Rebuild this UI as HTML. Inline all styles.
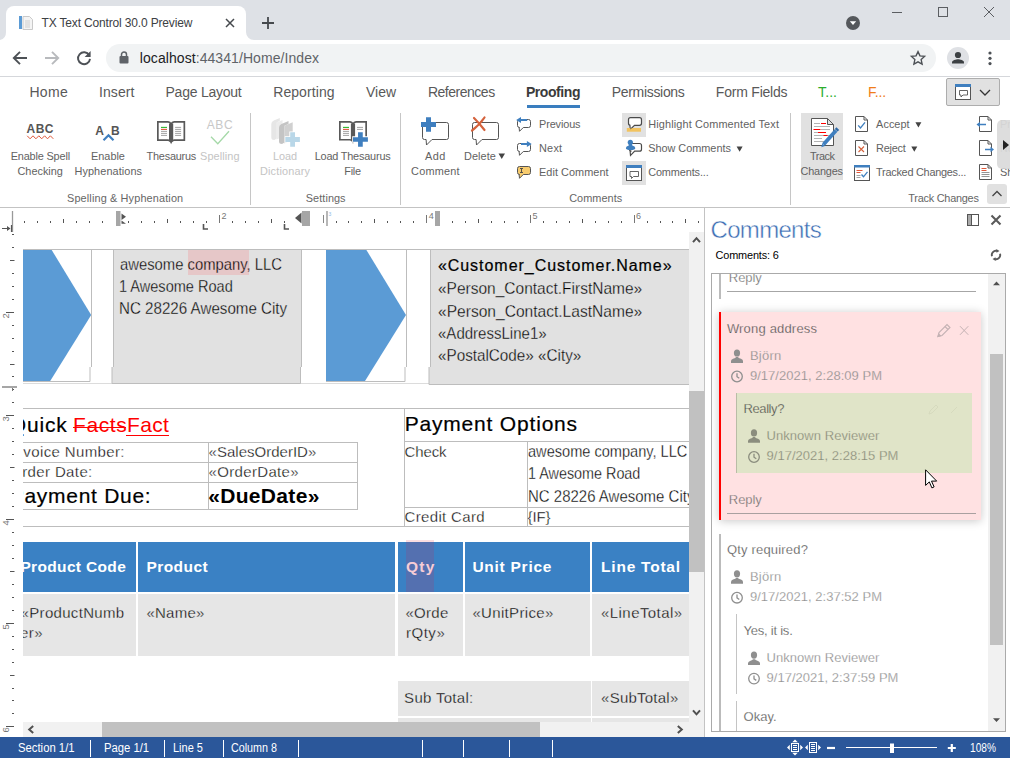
<!DOCTYPE html>
<html lang="en"><head><meta charset="utf-8"><title>TX Text Control 30.0 Preview</title>
<style>
*{box-sizing:border-box;margin:0;padding:0}
html,body{width:1010px;height:758px;overflow:hidden;background:#fff}
body{position:relative;font-family:"Liberation Sans",sans-serif;color:#444;font-size:12px}
.a{position:absolute}
.t{position:absolute;white-space:nowrap;line-height:1}
svg{position:absolute;overflow:visible}
.clip{position:absolute;overflow:hidden}
</style></head><body>
<!-- BROWSER CHROME -->
<div class="a" style="left:0px;top:0px;width:1010px;height:40px;background:#dee1e6;"></div><div class="a" style="left:6px;top:6px;width:240px;height:34px;background:#fff;border-radius:8px 8px 0 0"></div><svg style="left:0;top:32px" width="254" height="8" viewBox="0 0 254 8"><path d="M0 8h6V0a8 8 0 0 1-6 8z" fill="#fff"/><path d="M254 8h-8V0a8 8 0 0 0 8 8z" fill="#fff"/></svg><div class="a" style="left:0px;top:40px;width:1010px;height:36px;background:#fff;"></div><div class="a" style="left:0px;top:76px;width:1010px;height:1px;background:#d5d7db;"></div><div class="a" style="left:106px;top:44px;width:830px;height:28px;background:#f1f3f4;border-radius:14px"></div><div class="t" style="left:41.5px;top:17.0px;font-size:12px;color:#3c4043;letter-spacing:-0.16px;">TX Text Control 30.0 Preview</div><div class="t" style="left:139.8px;top:51.0px;font-size:14px;color:#202124;letter-spacing:0.07px;">localhost<span style="color:#5f6368">:44341/Home/Index</span></div>
<svg style="left:18px;top:15px" width="16" height="16" viewBox="0 0 16 16"><rect x="1" y="1" width="3" height="13" fill="#5b9bd5"/><path d="M5 1.500h6.500l3 3v10h-9.500z" fill="#f4f4f4" stroke="#c9c9c9"/><path d="M7 6h5M7 8h5M7 10h5M7 12h5" stroke="#cfcfcf"/></svg>
<svg style="left:225px;top:18px" width="10" height="10" viewBox="0 0 10 10"><path d="M1 1l8 8M9 1l-8 8" stroke="#45494d" stroke-width="1.500" fill="none"/></svg>
<svg style="left:262px;top:17px" width="12" height="12" viewBox="0 0 12 12"><path d="M6 0v12M0 6h12" stroke="#45494d" stroke-width="1.800" fill="none"/></svg>
<svg style="left:846px;top:16px" width="14" height="14" viewBox="0 0 14 14"><circle cx="7" cy="7" r="7" fill="#55585c"/><path d="M3.800 5.300h6.400l-3.200 3.800z" fill="#fff"/></svg>
<svg style="left:892px;top:7px" width="103" height="11" viewBox="0 0 103 11"><path d="M0 5.500h10" stroke="#5b5e62" stroke-width="1"/><rect x="46.500" y="0.500" width="9" height="9" fill="none" stroke="#5b5e62"/><path d="M92 0l10 10M102 0l-10 10" stroke="#5b5e62" stroke-width="1"/></svg>
<svg style="left:12px;top:50px" width="16" height="16" viewBox="0 0 16 16"><path d="M15 8H2.500M8 1.800L1.800 8l6.200 6.200" stroke="#4d5156" stroke-width="1.900" fill="none"/></svg>
<svg style="left:44px;top:50px" width="16" height="16" viewBox="0 0 16 16"><path d="M1 8h12.500M8 1.800L14.200 8l-6.200 6.200" stroke="#b8babd" stroke-width="1.900" fill="none"/></svg>
<svg style="left:76px;top:50px" width="16" height="16" viewBox="0 0 16 16"><path d="M13.200 5.200A6 6 0 1 0 14 8.800" stroke="#4d5156" stroke-width="1.900" fill="none"/><path d="M14.600 1v6h-6z" fill="#4d5156"/></svg>
<svg style="left:119px;top:51px" width="10" height="13" viewBox="0 0 10 13"><rect x="0.500" y="5" width="9" height="7.500" rx="1" fill="#5f6368"/><path d="M2.500 5.500V3.500a2.500 2.500 0 0 1 5 0v2" stroke="#5f6368" stroke-width="1.500" fill="none"/></svg>
<svg style="left:910px;top:50px" width="16" height="16" viewBox="0 0 16 16"><path d="M8 1.600l1.950 4.300 4.650.5-3.450 3.150.95 4.600L8 11.800l-4.100 2.350.95-4.600L1.400 6.400l4.650-.5z" fill="none" stroke="#4d5156" stroke-width="1.400"/></svg>
<svg style="left:947px;top:47px" width="22" height="22" viewBox="0 0 22 22"><circle cx="11" cy="11" r="11" fill="#dfe1e5"/><circle cx="11" cy="8" r="3.100" fill="#3c4043"/><path d="M5 16.500v-1.200c0-2 4-3 6-3s6 1 6 3v1.200z" fill="#3c4043"/></svg>
<svg style="left:988px;top:51px" width="4" height="15" viewBox="0 0 4 15"><circle cx="2" cy="2" r="1.600" fill="#4d5156"/><circle cx="2" cy="7.300" r="1.600" fill="#4d5156"/><circle cx="2" cy="12.600" r="1.600" fill="#4d5156"/></svg>
<!-- RIBBON TABS -->
<div class="t" style="left:29.4px;top:85.0px;font-size:14px;color:#595959;letter-spacing:0.36px;">Home</div><div class="t" style="left:99.0px;top:85.0px;font-size:14px;color:#595959;letter-spacing:0.09px;">Insert</div><div class="t" style="left:165.5px;top:85.0px;font-size:14px;color:#595959;letter-spacing:-0.24px;">Page Layout</div><div class="t" style="left:273.2px;top:85.0px;font-size:14px;color:#595959;letter-spacing:0.08px;">Reporting</div><div class="t" style="left:366.0px;top:85.0px;font-size:14px;color:#595959;letter-spacing:0.02px;">View</div><div class="t" style="left:427.9px;top:85.0px;font-size:14px;color:#595959;letter-spacing:-0.48px;">References</div><div class="t" style="left:611.8px;top:85.0px;font-size:14px;color:#595959;letter-spacing:-0.32px;">Permissions</div><div class="t" style="left:715.8px;top:85.0px;font-size:14px;color:#595959;letter-spacing:-0.21px;">Form Fields</div><div class="t" style="left:525.9px;top:85.0px;font-size:14px;color:#3b3b3b;font-weight:bold;letter-spacing:-0.42px;">Proofing</div><div class="a" style="left:527px;top:105px;width:53px;height:3px;background:#3a7ebf;"></div><div class="t" style="left:818.1px;top:85.0px;font-size:14px;color:#2cad2c;letter-spacing:0.08px;">T...</div><div class="t" style="left:868.1px;top:85.0px;font-size:14px;color:#f07d1a;letter-spacing:-0.22px;">F...</div><div class="a" style="left:946px;top:78px;width:54px;height:28px;background:#e1e1e1;border:1px solid #adadad;border-radius:2px"></div><svg style="left:0;top:0" width="1010" height="210" viewBox="0 0 1010 210" fill="none"><rect x="955.500" y="85.500" width="15" height="14" stroke="#555" fill="#fff"/><rect x="955" y="84" width="16" height="3" fill="#3f7fbf"/><path d="M959.500 90.500h8v4.500h-4.500l-2 2v-2h-1.500z" stroke="#555" stroke-width=".9"/><path d="M980 90l5 5 5-5" stroke="#333" stroke-width="1.300"/></svg><!-- RIBBON BODY -->
<div class="a" style="left:250px;top:113px;width:1px;height:92px;background:#c6c6c6;"></div><div class="a" style="left:400px;top:113px;width:1px;height:92px;background:#c6c6c6;"></div><div class="a" style="left:790px;top:113px;width:1px;height:92px;background:#c6c6c6;"></div><div class="a" style="left:0px;top:207px;width:1010px;height:1px;background:#c3c3c3;"></div><div class="a" style="left:622px;top:113px;width:24px;height:24px;background:#e1e1e1;"></div><div class="a" style="left:622px;top:161px;width:24px;height:24px;background:#e1e1e1;"></div><div class="a" style="left:801px;top:113px;width:42px;height:67px;background:#e1e1e1;"></div><div class="t" style="left:10.7px;top:150.6px;font-size:10.9px;color:#626262;letter-spacing:-0.16px;">Enable Spell</div><div class="t" style="left:17.5px;top:165.6px;font-size:10.9px;color:#626262;">Checking</div><div class="t" style="left:91.1px;top:150.6px;font-size:10.9px;color:#626262;letter-spacing:-0.02px;">Enable</div><div class="t" style="left:74.5px;top:165.6px;font-size:10.9px;color:#626262;letter-spacing:0.08px;">Hyphenations</div><div class="t" style="left:146.6px;top:150.6px;font-size:10.9px;color:#626262;letter-spacing:-0.23px;">Thesaurus</div><div class="t" style="left:200.1px;top:150.6px;font-size:10.9px;color:#c4c4c4;letter-spacing:0.09px;">Spelling</div><div class="t" style="left:273.1px;top:150.6px;font-size:10.9px;color:#c4c4c4;letter-spacing:-0.08px;">Load</div><div class="t" style="left:260.0px;top:165.6px;font-size:10.9px;color:#c4c4c4;letter-spacing:0.16px;">Dictionary</div><div class="t" style="left:314.7px;top:150.6px;font-size:10.9px;color:#626262;letter-spacing:-0.19px;">Load Thesaurus</div><div class="t" style="left:344.3px;top:165.6px;font-size:10.9px;color:#626262;letter-spacing:-0.26px;">File</div><div class="t" style="left:425.1px;top:150.6px;font-size:10.9px;color:#626262;letter-spacing:0.37px;">Add</div><div class="t" style="left:411.1px;top:165.6px;font-size:10.9px;color:#626262;letter-spacing:0.21px;">Comment</div><div class="t" style="left:464.1px;top:150.6px;font-size:10.9px;color:#626262;letter-spacing:0.05px;">Delete</div><div class="t" style="left:809.9px;top:150.6px;font-size:10.9px;color:#626262;letter-spacing:-0.42px;">Track</div><div class="t" style="left:800.6px;top:165.6px;font-size:10.9px;color:#626262;letter-spacing:-0.20px;">Changes</div><div class="t" style="left:539.0px;top:118.5px;font-size:10.9px;color:#626262;letter-spacing:-0.12px;">Previous</div><div class="t" style="left:539.0px;top:142.6px;font-size:10.9px;color:#626262;letter-spacing:0.23px;">Next</div><div class="t" style="left:539.0px;top:166.6px;font-size:10.9px;color:#626262;letter-spacing:0.05px;">Edit Comment</div><div class="t" style="left:648.2px;top:118.5px;font-size:10.9px;color:#626262;letter-spacing:0.14px;">Highlight Commented Text</div><div class="t" style="left:648.2px;top:142.6px;font-size:10.9px;color:#626262;letter-spacing:-0.02px;">Show Comments</div><div class="t" style="left:648.2px;top:166.6px;font-size:10.9px;color:#626262;letter-spacing:-0.12px;">Comments...</div><div class="t" style="left:876.1px;top:118.5px;font-size:10.9px;color:#626262;letter-spacing:0.04px;">Accept</div><div class="t" style="left:876.1px;top:142.6px;font-size:10.9px;color:#626262;letter-spacing:-0.23px;">Reject</div><div class="t" style="left:876.1px;top:166.6px;font-size:10.9px;color:#626262;letter-spacing:-0.26px;">Tracked Changes...</div><div class="t" style="left:67.0px;top:192.6px;font-size:10.9px;color:#666;letter-spacing:0.14px;">Spelling &amp; Hyphenation</div><div class="t" style="left:305.8px;top:192.6px;font-size:10.9px;color:#666;letter-spacing:0.06px;">Settings</div><div class="t" style="left:569.2px;top:192.6px;font-size:10.9px;color:#666;letter-spacing:0.06px;">Comments</div><div class="t" style="left:908.3px;top:192.6px;font-size:10.9px;color:#666;letter-spacing:-0.24px;">Track Changes</div><div class="t" style="left:999.9px;top:118.5px;font-size:10.9px;color:#bbb;">Pr</div><div class="t" style="left:999.9px;top:142.6px;font-size:10.9px;color:#bbb;">Ne</div><div class="t" style="left:999.9px;top:166.6px;font-size:10.9px;color:#626262;">Sh</div><div class="t" style="left:26.6px;top:123.0px;font-size:12px;color:#555;font-weight:bold;letter-spacing:0.45px;">ABC</div><div class="t" style="left:95.3px;top:125.0px;font-size:12px;color:#555;font-weight:bold;letter-spacing:1.47px;">A</div><div class="t" style="left:111.0px;top:125.0px;font-size:12px;color:#555;font-weight:bold;letter-spacing:0.57px;">B</div><div class="t" style="left:206.7px;top:119.0px;font-size:12px;color:#c8c8c8;letter-spacing:0.68px;">ABC</div><svg style="left:0;top:0" width="1010" height="210" viewBox="0 0 1010 210" fill="none"><path d="M27.200 135.800l2.900 3l2.900 -3l2.900 3l2.900 -3l2.900 3l2.900 -3l2.900 3l2.900 -3l2.900 3" stroke="#e0583a" stroke-width="1"/><path d="M103.500 140.300l5-5 5 5" stroke="#3f7fbf" stroke-width="2.200"/><g transform="translate(157 121)"><path d="M.85 .85H11.1Q13.1 .85 14.1 3Q15.1 .85 17.1 .85H27.35V19.15H17.1Q15.1 19.15 14.1 21.2Q13.1 19.15 11.1 19.15H.85z" fill="#fff" stroke="#595959" stroke-width="1.700"/><path d="M12 2.500h4.200v17.5l-2.100 1.600-2.100-1.600z" fill="#595959"/><path d="M4 6.400h6" stroke="#2db52d" stroke-width="1.100"/><path d="M4 8.400h6" stroke="#e0583a" stroke-width="1.100"/><path d="M4 10.400h6M4 12.400h6M4 14.400h6" stroke="#999" stroke-width=".9"/><path d="M18.1 6.4h6M18.1 8.4h6M18.1 10.4h6M18.1 12.4h6M18.1 14.4h6" stroke="#999" stroke-width=".9"/></g><path d="M211 136.800l6.800 7 11.200-12.500" stroke="#a5d9a8" stroke-width="1.300"/><g><path d="M271.300 124q0-2.500 2.500-3.500l6-2.500v3l-3 1.200v16.300l-2.500 1.500q-3 0-3-2.500z" fill="#e6e6e6"/><path d="M276.500 122.500l6-2.500v17l-6 2.500z" fill="#ececec"/><path d="M279 127.500q0-2.500 2.500-3.500l7-3v3l-4 1.700v16.800l-2.500 1.500q-3 0-3-2.500z" fill="#c4c4c4"/><path d="M284.500 125.700l8.200-3.500v17.300l-8.200 4z" fill="#d0d0d0"/></g><path d="M292.600 131.500v16M284.700 139.500h15.800" stroke="#fff" stroke-width="6.600"/><path d="M292.600 132.200v14.600M285.300 139.500h14.600" stroke="#b9d7e8" stroke-width="4.800"/><g transform="translate(339 121)"><path d="M.85 .85H11Q13 .85 14 3Q15 .85 17 .85H27.15V18.75H17Q15 18.75 14 20.8Q13 18.75 11 18.75H.85z" fill="#fff" stroke="#595959" stroke-width="1.700"/><path d="M11.9 2.500h4.200v17.1l-2.100 1.600-2.100-1.600z" fill="#595959"/><path d="M4 6.400h6" stroke="#2db52d" stroke-width="1.100"/><path d="M4 8.400h6" stroke="#e0583a" stroke-width="1.100"/><path d="M4 10.400h6M4 12.400h6M4 14.400h6" stroke="#999" stroke-width=".9"/><path d="M18 6.4h6M18 8.4h6" stroke="#999" stroke-width=".9"/></g><path d="M360.400 131.400v16M352.200 139.500h16.400" stroke="#fff" stroke-width="6.400"/><path d="M360.400 132.200v14.500M353 139.500h14.900" stroke="#3f7fbf" stroke-width="4.700"/><path d="M424.5 122.5H446.5a2 2 0 0 1 2 2V137.5a2 2 0 0 1 -2 2H432l-5.5 5.5l-.4 -5.5H424.5a2 2 0 0 1 -2 -2V124.5a2 2 0 0 1 2 -2z" fill="#fff" stroke="#555" stroke-width="1"/><path d="M428.500 117.200v14.600M421 124.500h15" stroke="#3f7fbf" stroke-width="5"/><path d="M474.5 122.5H496.5a2 2 0 0 1 2 2V137.5a2 2 0 0 1 -2 2H482l-5.5 5.5l-.4 -5.5H474.5a2 2 0 0 1 -2 -2V124.5a2 2 0 0 1 2 -2z" fill="#fff" stroke="#555" stroke-width="1"/><path d="M472 130.500q7-5 12.500-13M474 118q5 5 10.500 12" stroke="#d4623c" stroke-width="2.200" stroke-linecap="round"/><path d="M498.500 153.500h6.500l-3.250 5.600z" fill="#444"/><path d="M519.5 119.5H528.5a2 2 0 0 1 2 2V125.5a2 2 0 0 1 -2 2H523.3l-3.8 3.8l-.4 -3.8H519.5a2 2 0 0 1 -2 -2V121.5a2 2 0 0 1 2 -2z" fill="#fff" stroke="#555" stroke-width="1"/><path d="M520 120h7.200" stroke="#3f7fbf" stroke-width="2"/><path d="M516.200 120l4.800-2.900v5.800z" fill="#3f7fbf"/><path d="M519.5 143.5H528.5a2 2 0 0 1 2 2V149.5a2 2 0 0 1 -2 2H523.3l-3.8 3.8l-.4 -3.8H519.5a2 2 0 0 1 -2 -2V145.5a2 2 0 0 1 2 -2z" fill="#fff" stroke="#555" stroke-width="1"/><path d="M521 144h7" stroke="#3f7fbf" stroke-width="2"/><path d="M531.700 144l-4.800-2.900v5.800z" fill="#3f7fbf"/><path d="M519.5 166.5H528.5a2 2 0 0 1 2 2V172.5a2 2 0 0 1 -2 2H523.3l-3.8 3.8l-.4 -3.8H519.5a2 2 0 0 1 -2 -2V168.5a2 2 0 0 1 2 -2z" fill="#f7cb6d" stroke="#555" stroke-width="1"/><path d="M520 168.500h3M520 172.500h3M521.500 168.500v4" stroke="#444" stroke-width=".9"/><path d="M630.5 117.7H639.5a2 2 0 0 1 2 2V123.3a2 2 0 0 1 -2 2H634.5l-4.2 4.2l-.4 -4.2H630.5a2 2 0 0 1 -2 -2V119.7a2 2 0 0 1 2 -2z" fill="#fff" stroke="#4a4a4a" stroke-width="1.200"/><rect x="626.800" y="128" width="14.200" height="3.700" fill="#f2c35f"/><path d="M630.300 129.600l.2-1.600h1.500z" fill="#4a4a4a"/><path d="M631.5 143.5H639.5a2 2 0 0 1 2 2V149.2a2 2 0 0 1 -2 2H634.7l-4.2 4.2l-.4 -4.2H631.5a2 2 0 0 1 -2 -2V145.5a2 2 0 0 1 2 -2z" fill="#fff" stroke="#4a4a4a" stroke-width="1.200"/><circle cx="630.300" cy="142.300" r="2.600" fill="#3f7fbf"/><path d="M628.600 144h3.400l.3 1.600q3 .6 3 2.400 0 2-4.700 2t-4.700-2q0-1.800 3-2.400z" fill="#3f7fbf"/><rect x="626.500" y="165.500" width="15" height="15" fill="#fff" stroke="#555"/><rect x="626" y="165" width="16" height="3" fill="#3f7fbf"/><path d="M630 171.500h8.500v5h-5l-2 2v-2H630z" stroke="#555" stroke-width=".9"/><path d="M736.600 146.500h6l-3 5.300z" fill="#444"/><path d="M811.5 118.5H827.5L833.5 124.5V145.5H811.5zM827.5 118.5V124.5H833.5" fill="#fff" stroke="#555" stroke-width="1"/><path d="M814 123.500h6M814 126.500h16M821 129.500h9M814 132.500h4M814 135.500h16M814 138.500h8M814 141.500h12" stroke="#aaa" stroke-width=".9"/><path d="M821 123.500h5M813.500 129.500h7M818 132.500h8M823.500 135.500h4" stroke="#f00" stroke-width="1.100"/><path d="M823.500 144.500l12.500-14" stroke="#3f7fbf" stroke-width="3.800"/><path d="M821.300 147.200l1-3.800 2.700 2.500z" fill="#3f7fbf"/><path d="M836.200 130.300l1.600-1.700" stroke="#2f6aa8" stroke-width="3.800"/><path d="M855.5 116.5H864L867.5 120V131.5H855.5zM864 116.5V120H867.5" fill="#fff" stroke="#555" stroke-width="1"/><path d="M858.200 125.300l2.300 2.700 4.500-5.700" stroke="#3f7fbf" stroke-width="1.300"/><path d="M855.5 140.5H864L867.5 144V155.5H855.5zM864 140.5V144H867.5" fill="#fff" stroke="#555" stroke-width="1"/><path d="M858.500 146.500l5.500 5.500M864 146.500l-5.500 5.500" stroke="#d4623c" stroke-width="1.100"/><rect x="854.500" y="165.500" width="15" height="15" fill="#fff" stroke="#555"/><rect x="854" y="165" width="16" height="2.500" fill="#3f7fbf"/><path d="M856.500 170.500h6M856.500 172.500h4" stroke="#e0583a"/><path d="M856.500 175.500h4M856.500 177.500h4" stroke="#999" stroke-width=".9"/><path d="M861.500 174.500l2 2.300 4-5" stroke="#3f7fbf" stroke-width="1.300"/><path d="M915.400 122.200h6l-3 5.300zM911.300 146.400h6l-3 5.300z" fill="#444"/><path d="M979.5 116.5H988L991.5 120V131.5H979.5zM988 116.5V120H991.5" fill="#fff" stroke="#555" stroke-width="1"/><path d="M979 124.500h7" stroke="#3f7fbf" stroke-width="1.500"/><path d="M976.500 124.500l3.500-2.800v5.600z" fill="#3f7fbf"/><path d="M979.5 140.5H988L991.5 144V155.5H979.5zM988 140.5V144H991.5" fill="#fff" stroke="#555" stroke-width="1"/><path d="M985 149.500h6" stroke="#3f7fbf" stroke-width="1.500"/><path d="M994 149.500l-3.500-2.800v5.600z" fill="#3f7fbf"/><path d="M979.5 164.5H988L991.5 168V179.5H979.5zM988 164.5V168H991.5" fill="#fff" stroke="#555" stroke-width="1"/><path d="M981.500 168.500h5M981.500 170.500h5" stroke="#e0583a"/><path d="M981.500 172.500h8M981.500 174.500h8M981.500 176.500h8" stroke="#888" stroke-width=".9"/></svg><div class="a" style="left:997px;top:120px;width:14px;height:49px;background:rgba(215,215,215,.85);border-radius:5px 0 0 5px"></div><svg style="left:1002.500px;top:140px" width="6" height="10" viewBox="0 0 6 10"><path d="M0 0l6 5-6 5z" fill="#222"/></svg><div class="a" style="left:987px;top:184px;width:20px;height:20px;background:#e1e1e1;border-radius:3px"></div><svg style="left:992px;top:190px" width="10" height="7" viewBox="0 0 10 7"><path d="M.5 6l4.500-4.500 4.500 4.500" stroke="#444" stroke-width="1.300" fill="none"/></svg><!-- RULERS -->
<svg style="left:0;top:0" width="1010" height="758" viewBox="0 0 1010 758" fill="none"><rect x="24" y="221" width="1" height="2" fill="#555"/><rect x="37" y="221" width="1" height="2" fill="#555"/><rect x="50" y="221" width="1" height="2" fill="#555"/><path d="M63.5 219v4" stroke="#555" stroke-width="1"/><rect x="76" y="221" width="1" height="2" fill="#555"/><rect x="89" y="221" width="1" height="2" fill="#555"/><rect x="102" y="221" width="1" height="2" fill="#555"/><rect x="128" y="221" width="1" height="2" fill="#555"/><rect x="141" y="221" width="1" height="2" fill="#555"/><rect x="154" y="221" width="1" height="2" fill="#555"/><path d="M167.5 219v4" stroke="#555" stroke-width="1"/><rect x="180" y="221" width="1" height="2" fill="#555"/><rect x="193" y="221" width="1" height="2" fill="#555"/><rect x="206" y="221" width="1" height="2" fill="#555"/><path d="M219.5 215v8" stroke="#777" stroke-width="1"/><rect x="232" y="221" width="1" height="2" fill="#555"/><rect x="245" y="221" width="1" height="2" fill="#555"/><rect x="258" y="221" width="1" height="2" fill="#555"/><path d="M271.5 219v4" stroke="#555" stroke-width="1"/><rect x="284" y="221" width="1" height="2" fill="#555"/><path d="M323.5 215v8" stroke="#777" stroke-width="1"/><rect x="336" y="221" width="1" height="2" fill="#555"/><rect x="348" y="221" width="1" height="2" fill="#555"/><rect x="361" y="221" width="1" height="2" fill="#555"/><path d="M374.5 219v4" stroke="#555" stroke-width="1"/><rect x="387" y="221" width="1" height="2" fill="#555"/><rect x="400" y="221" width="1" height="2" fill="#555"/><rect x="413" y="221" width="1" height="2" fill="#555"/><path d="M426.5 215v8" stroke="#777" stroke-width="1"/><rect x="452" y="221" width="1" height="2" fill="#555"/><rect x="465" y="221" width="1" height="2" fill="#555"/><path d="M478.5 219v4" stroke="#555" stroke-width="1"/><rect x="491" y="221" width="1" height="2" fill="#555"/><rect x="504" y="221" width="1" height="2" fill="#555"/><rect x="517" y="221" width="1" height="2" fill="#555"/><path d="M530.5 215v8" stroke="#777" stroke-width="1"/><rect x="543" y="221" width="1" height="2" fill="#555"/><rect x="556" y="221" width="1" height="2" fill="#555"/><rect x="569" y="221" width="1" height="2" fill="#555"/><path d="M582.5 219v4" stroke="#555" stroke-width="1"/><rect x="595" y="221" width="1" height="2" fill="#555"/><rect x="608" y="221" width="1" height="2" fill="#555"/><rect x="621" y="221" width="1" height="2" fill="#555"/><path d="M634.5 215v8" stroke="#777" stroke-width="1"/><rect x="647" y="221" width="1" height="2" fill="#555"/><rect x="660" y="221" width="1" height="2" fill="#555"/><rect x="672" y="221" width="1" height="2" fill="#555"/><path d="M685.5 219v4" stroke="#555" stroke-width="1"/><rect x="698" y="221" width="1" height="2" fill="#555"/><path d="M12.500 211v21" stroke="#999" stroke-width="1.300"/><path d="M2 228.500h8M11.500 225v7" stroke="#555" stroke-width="1.200"/><path d="M10.500 228.500l-3.500-2.600v5.200z" fill="#555"/><rect x="116" y="211" width="4.500" height="15" fill="#a6a6a6"/><path d="M121.500 213.500l4.500 3.200-4.500 3.200zM121.500 220.500l4.500 3.200h-4.500z" fill="#555"/><rect x="302" y="211" width="8" height="15" fill="#a6a6a6"/><path d="M301.500 212.500v11l-6.500-5.500z" fill="#555"/><path d="M323.500 215v8" stroke="#888"/><path d="M327 211v15" stroke="#a6a6a6" stroke-width="1.600"/><rect x="435" y="211" width="5" height="15" fill="#a6a6a6"/><path d="M203.5 224v5h4.500" stroke="#555" stroke-width="1.600"/><path d="M284.5 224v5h4.500" stroke="#555" stroke-width="1.600"/><rect x="12" y="234" width="2" height="1" fill="#555"/><rect x="12" y="247" width="2" height="1" fill="#555"/><path d="M10 260.5h4.500" stroke="#555" stroke-width="1"/><rect x="12" y="273" width="2" height="1" fill="#555"/><rect x="12" y="286" width="2" height="1" fill="#555"/><rect x="12" y="299" width="2" height="1" fill="#555"/><path d="M6 312.5h8" stroke="#555" stroke-width="1"/><rect x="12" y="325" width="2" height="1" fill="#555"/><rect x="12" y="338" width="2" height="1" fill="#555"/><rect x="12" y="351" width="2" height="1" fill="#555"/><path d="M10 364.5h4.500" stroke="#555" stroke-width="1"/><rect x="12" y="376" width="2" height="1" fill="#555"/><rect x="12" y="389" width="2" height="1" fill="#555"/><rect x="12" y="402" width="2" height="1" fill="#555"/><path d="M6 415.5h8" stroke="#555" stroke-width="1"/><rect x="12" y="428" width="2" height="1" fill="#555"/><rect x="12" y="441" width="2" height="1" fill="#555"/><rect x="12" y="454" width="2" height="1" fill="#555"/><path d="M10 467.5h4.500" stroke="#555" stroke-width="1"/><rect x="12" y="480" width="2" height="1" fill="#555"/><rect x="12" y="493" width="2" height="1" fill="#555"/><rect x="12" y="506" width="2" height="1" fill="#555"/><path d="M6 519.5h8" stroke="#555" stroke-width="1"/><rect x="12" y="532" width="2" height="1" fill="#555"/><rect x="12" y="545" width="2" height="1" fill="#555"/><rect x="12" y="558" width="2" height="1" fill="#555"/><path d="M10 571.5h4.500" stroke="#555" stroke-width="1"/><rect x="12" y="584" width="2" height="1" fill="#555"/><rect x="12" y="597" width="2" height="1" fill="#555"/><rect x="12" y="610" width="2" height="1" fill="#555"/><path d="M6 623.5h8" stroke="#555" stroke-width="1"/><rect x="12" y="636" width="2" height="1" fill="#555"/><rect x="12" y="649" width="2" height="1" fill="#555"/><rect x="12" y="662" width="2" height="1" fill="#555"/><path d="M10 675.5h4.500" stroke="#555" stroke-width="1"/><rect x="12" y="688" width="2" height="1" fill="#555"/><rect x="12" y="700" width="2" height="1" fill="#555"/><rect x="12" y="713" width="2" height="1" fill="#555"/><path d="M6 726.5h8" stroke="#555" stroke-width="1"/><rect x="2" y="386" width="15" height="2" fill="#a6a6a6"/><path d="M12.500 388v3" stroke="#777"/></svg><div class="t" style="left:221.4px;top:212px;font-size:9px;color:#777">2</div><div class="t" style="left:428.7px;top:212px;font-size:9px;color:#777">4</div><div class="t" style="left:532.4px;top:212px;font-size:9px;color:#777">5</div><div class="t" style="left:636.1px;top:212px;font-size:9px;color:#777">6</div><div class="t" style="left:328.500px;top:212px;font-size:5px;color:#8dbbe6">3</div><div class="t" style="left:3.200px;top:311.3px;font-size:9.500px;color:#777;transform:rotate(-90deg);transform-origin:center">2</div><div class="t" style="left:3.200px;top:414.3px;font-size:9.500px;color:#777;transform:rotate(-90deg);transform-origin:center">3</div><div class="t" style="left:3.200px;top:518.3px;font-size:9.500px;color:#777;transform:rotate(-90deg);transform-origin:center">4</div><div class="t" style="left:3.200px;top:622.3px;font-size:9.500px;color:#777;transform:rotate(-90deg);transform-origin:center">5</div><div class="t" style="left:3.200px;top:725.3px;font-size:9.500px;color:#777;transform:rotate(-90deg);transform-origin:center">6</div><!-- DOCUMENT -->
<div class="clip" style="left:23px;top:232px;width:666px;height:490px;background:#fff"><div class="a" style="left:0px;top:17px;width:666px;height:1px;background:#bdbdbd;"></div><div class="a" style="left:0px;top:151px;width:666px;height:1px;background:#dcdcdc;"></div><div class="a" style="left:91px;top:18px;width:187px;height:133px;background:#e1e1e1;"></div><div class="a" style="left:408px;top:18px;width:258px;height:134px;background:#e1e1e1;"></div><div class="a" style="left:165px;top:18px;width:61px;height:25px;background:#e6c7c8;"></div><div class="a" style="left:89px;top:135px;width:3px;height:16px;background:#e1e1e1;"></div><div class="a" style="left:406px;top:135px;width:3px;height:17px;background:#e1e1e1;"></div><svg style="left:0;top:0" width="666" height="490" viewBox="23 232 666 490" fill="none"><path d="M23 250h28.700l39.500 65-41 66H23z" fill="#5b9bd5"/><path d="M326 250h40.400l39.600 65-41 66H326z" fill="#5b9bd5"/><path d="M91.500 250v117M90 367v14.500H23M113.500 250v117M112 367v16.500h188.500V367M301.500 367V250M406.500 250v117M405 367v14.500h-79M430.500 250v117M429 367v17.500h260" stroke="#bdbdbd"/></svg><div class="t" style="left:96.9px;top:24.5px;font-size:16px;color:#000;-webkit-text-stroke:.3px #e1e1e1;transform:scaleX(0.926);transform-origin:0 0">awesome <span style="-webkit-text-stroke-color:#e6c7c8">company,</span> LLC</div><div class="t" style="left:96.2px;top:46.5px;font-size:16px;color:#000;-webkit-text-stroke:.3px #e1e1e1;transform:scaleX(0.909);transform-origin:0 0">1 Awesome Road</div><div class="t" style="left:96.2px;top:68.5px;font-size:16px;color:#000;-webkit-text-stroke:.3px #e1e1e1;transform:scaleX(0.947);transform-origin:0 0">NC 28226 Awesome City</div><div class="t" style="left:414.9px;top:25.5px;font-size:16px;color:#000;letter-spacing:0.96px;-webkit-text-stroke:.22px #000;">«Customer_Customer.Name»</div><div class="t" style="left:414.9px;top:48.5px;font-size:16px;color:#000;-webkit-text-stroke:.3px #e1e1e1;transform:scaleX(0.969);transform-origin:0 0">«Person_Contact.FirstName»</div><div class="t" style="left:414.9px;top:71.5px;font-size:16px;color:#000;-webkit-text-stroke:.3px #e1e1e1;transform:scaleX(0.973);transform-origin:0 0">«Person_Contact.LastName»</div><div class="t" style="left:414.9px;top:93.5px;font-size:16px;color:#000;-webkit-text-stroke:.3px #e1e1e1;transform:scaleX(0.939);transform-origin:0 0">«AddressLine1»</div><div class="t" style="left:414.9px;top:115.5px;font-size:16px;color:#000;-webkit-text-stroke:.3px #e1e1e1;transform:scaleX(0.953);transform-origin:0 0">«PostalCode» «City»</div><div class="a" style="left:0px;top:176px;width:666px;height:1px;background:#bdbdbd;"></div><div class="a" style="left:0px;top:294px;width:666px;height:1px;background:#bdbdbd;"></div><div class="a" style="left:381px;top:176px;width:1px;height:118px;background:#bdbdbd;"></div><div class="t" style="left:-13.3px;top:182.0px;font-size:21px;color:#000;letter-spacing:0.87px;-webkit-text-stroke:.2px #000;">Quick</div><div class="t" style="left:50.1px;top:182.0px;font-size:21px;color:#f00;letter-spacing:0.56px;">Facts</div><div class="a" style="left:49.8px;top:194.5px;width:53.2px;height:1.6px;background:#f00;"></div><div class="t" style="left:104.0px;top:182.0px;font-size:21px;color:#f00;letter-spacing:0.32px;">Fact</div><div class="a" style="left:103px;top:202.6px;width:43px;height:1.5px;background:#f00;"></div><div class="a" style="left:0px;top:209.5px;width:335px;height:1px;background:#bdbdbd;"></div><div class="a" style="left:0px;top:230px;width:335px;height:1px;background:#bdbdbd;"></div><div class="a" style="left:0px;top:250px;width:335px;height:1px;background:#bdbdbd;"></div><div class="a" style="left:0px;top:277px;width:335px;height:1px;background:#bdbdbd;"></div><div class="a" style="left:185px;top:209.5px;width:1px;height:68px;background:#bdbdbd;"></div><div class="a" style="left:334px;top:209.5px;width:1px;height:68px;background:#bdbdbd;"></div><div class="t" style="left:-12.9px;top:212.0px;font-size:15px;color:#000;letter-spacing:0.37px;-webkit-text-stroke:.3px #fff;">Invoice Number:</div><div class="t" style="left:-12.9px;top:232.0px;font-size:15px;color:#000;letter-spacing:0.38px;-webkit-text-stroke:.3px #fff;">Order Date:</div><div class="t" style="left:-13.3px;top:253.0px;font-size:21px;color:#000;letter-spacing:0.72px;-webkit-text-stroke:.2px #000;">Payment Due:</div><div class="t" style="left:185.6px;top:212.0px;font-size:15px;color:#000;letter-spacing:0.01px;-webkit-text-stroke:.3px #fff;">«SalesOrderID»</div><div class="t" style="left:185.6px;top:232.0px;font-size:15px;color:#000;letter-spacing:0.33px;-webkit-text-stroke:.3px #fff;">«OrderDate»</div><div class="t" style="left:185.2px;top:253.0px;font-size:21px;color:#000;font-weight:bold;letter-spacing:0.33px;">«DueDate»</div><div class="t" style="left:381.7px;top:181.0px;font-size:21px;color:#000;letter-spacing:0.81px;-webkit-text-stroke:.2px #000;">Payment Options</div><div class="a" style="left:381px;top:209px;width:285px;height:1px;background:#bdbdbd;"></div><div class="a" style="left:381px;top:275px;width:285px;height:1px;background:#bdbdbd;"></div><div class="a" style="left:504px;top:209px;width:1px;height:85px;background:#bdbdbd;"></div><div class="t" style="left:381.6px;top:212.0px;font-size:15px;color:#000;letter-spacing:-0.13px;-webkit-text-stroke:.3px #fff;">Check</div><div class="t" style="left:381.6px;top:277.0px;font-size:15px;color:#000;letter-spacing:0.33px;-webkit-text-stroke:.3px #fff;">Credit Card</div><div class="t" style="left:504.5px;top:211.5px;font-size:16px;color:#000;-webkit-text-stroke:.3px #fff;transform:scaleX(0.911);transform-origin:0 0">awesome company, LLC</div><div class="t" style="left:504.5px;top:233.5px;font-size:16px;color:#000;-webkit-text-stroke:.3px #fff;transform:scaleX(0.898);transform-origin:0 0">1 Awesome Road</div><div class="t" style="left:504.5px;top:256.5px;font-size:16px;color:#000;-webkit-text-stroke:.3px #fff;transform:scaleX(0.937);transform-origin:0 0">NC 28226 Awesome City</div><div class="t" style="left:504.6px;top:277.0px;font-size:15px;color:#000;letter-spacing:-0.16px;-webkit-text-stroke:.3px #fff;">{IF}</div><div class="a" style="left:0px;top:310px;width:113px;height:50px;background:#3a81c4;"></div><div class="a" style="left:0px;top:362px;width:113px;height:61.5px;background:#e6e6e6;"></div><div class="a" style="left:115.3px;top:310px;width:257.2px;height:50px;background:#3a81c4;"></div><div class="a" style="left:115.3px;top:362px;width:257.2px;height:61.5px;background:#e6e6e6;"></div><div class="a" style="left:375px;top:310px;width:64.7px;height:50px;background:#3a81c4;"></div><div class="a" style="left:375px;top:362px;width:64.7px;height:61.5px;background:#e6e6e6;"></div><div class="a" style="left:442px;top:310px;width:125px;height:50px;background:#3a81c4;"></div><div class="a" style="left:442px;top:362px;width:125px;height:61.5px;background:#e6e6e6;"></div><div class="a" style="left:569.4px;top:310px;width:96.6px;height:50px;background:#3a81c4;"></div><div class="a" style="left:569.4px;top:362px;width:96.6px;height:61.5px;background:#e6e6e6;"></div><div class="a" style="left:375px;top:448.5px;width:192.7px;height:35.5px;background:#e6e6e6;"></div><div class="a" style="left:569.4px;top:448.5px;width:97px;height:35.5px;background:#e6e6e6;"></div><div class="a" style="left:375px;top:486.2px;width:192.7px;height:5px;background:#e6e6e6;"></div><div class="a" style="left:569.4px;top:486.2px;width:97px;height:5px;background:#e6e6e6;"></div><div class="a" style="left:383.4px;top:307.6px;width:27.3px;height:2.4px;background:#fbdde1;"></div><div class="a" style="left:383.4px;top:310px;width:27.3px;height:50px;background:#5470b0;"></div><div class="t" style="left:-2.6px;top:326.8px;font-size:15.5px;color:#fff;font-weight:bold;letter-spacing:0.34px;">Product Code</div><div class="t" style="left:123.4px;top:326.8px;font-size:15.5px;color:#fff;font-weight:bold;letter-spacing:0.46px;">Product</div><div class="t" style="left:382.9px;top:326.8px;font-size:15.5px;color:#f6cdd6;font-weight:bold;letter-spacing:1.31px;">Qty</div><div class="t" style="left:449.4px;top:326.8px;font-size:15.5px;color:#fff;font-weight:bold;letter-spacing:0.74px;">Unit Price</div><div class="t" style="left:578.1px;top:326.8px;font-size:15.5px;color:#fff;font-weight:bold;letter-spacing:0.77px;">Line Total</div><div class="t" style="left:-2.4px;top:373.0px;font-size:15px;color:#000;letter-spacing:0.31px;-webkit-text-stroke:.3px #e6e6e6;">«ProductNumb</div><div class="t" style="left:-2.9px;top:393.0px;font-size:15px;color:#000;letter-spacing:0.34px;-webkit-text-stroke:.3px #e6e6e6;">er»</div><div class="t" style="left:123.4px;top:373.0px;font-size:15px;color:#000;letter-spacing:0.25px;-webkit-text-stroke:.3px #e6e6e6;">«Name»</div><div class="t" style="left:382.5px;top:373.0px;font-size:15px;color:#000;letter-spacing:0.26px;-webkit-text-stroke:.3px #e6e6e6;">«Orde</div><div class="t" style="left:382.9px;top:393.0px;font-size:15px;color:#000;letter-spacing:0.54px;-webkit-text-stroke:.3px #e6e6e6;">rQty»</div><div class="t" style="left:449.4px;top:373.0px;font-size:15px;color:#000;letter-spacing:0.34px;-webkit-text-stroke:.3px #e6e6e6;">«UnitPrice»</div><div class="t" style="left:578.1px;top:373.0px;font-size:15px;color:#000;letter-spacing:0.42px;-webkit-text-stroke:.3px #e6e6e6;">«LineTotal»</div><div class="t" style="left:381.1px;top:458.0px;font-size:15px;color:#000;letter-spacing:0.30px;-webkit-text-stroke:.3px #e6e6e6;">Sub Total:</div><div class="t" style="left:578.1px;top:458.0px;font-size:15px;color:#000;letter-spacing:0.23px;-webkit-text-stroke:.3px #e6e6e6;">«SubTotal»</div></div><div class="a" style="left:689px;top:232px;width:15px;height:506px;background:#f1f1f1;"></div><div class="a" style="left:689px;top:391px;width:15px;height:181px;background:#c1c1c1;"></div><div class="a" style="left:23px;top:722px;width:666px;height:15px;background:#f1f1f1;"></div><div class="a" style="left:102px;top:722px;width:438px;height:15px;background:#c1c1c1;"></div><svg style="left:0;top:0" width="1010" height="758" viewBox="0 0 1010 758" fill="none" stroke="#505050" stroke-width="2"><path d="M693 242.200l3.500-4 3.500 4M693 710.300l3.500 4 3.500-4M33.200 726l-4 3.500 4 3.500M677.800 726l4 3.500-4 3.500"/></svg><!-- COMMENTS PANEL -->
<div class="a" style="left:704px;top:208px;width:1px;height:530px;background:#c3c3c3;"></div><div class="a" style="left:705px;top:208px;width:305px;height:529px;background:#fff;"></div><div class="t" style="left:710.5px;top:217.5px;font-size:24px;color:#3c6db3;letter-spacing:-0.68px;-webkit-text-stroke:.45px #fff;">Comments</div><div class="t" style="left:715.6px;top:249.6px;font-size:10.9px;color:#000;letter-spacing:-0.16px;">Comments: 6</div><svg style="left:0;top:0" width="1010" height="758" viewBox="0 0 1010 758" fill="none"><rect x="967.500" y="214.500" width="11" height="11" stroke="#555"/><rect x="968" y="215" width="3.500" height="10" fill="#aaa"/><path d="M971.500 214.500v11" stroke="#555"/><path d="M991.500 215.500l9 9M1000.500 215.500l-9 9" stroke="#5a5a5a" stroke-width="2.100"/><path d="M992 256.200a4.100 4.100 0 0 1 5-5.200M1000 253.800a4.100 4.100 0 0 1-5 5.200" stroke="#5a5a5a" stroke-width="1.900"/><path d="M996.300 249l3.200 1.900-3 1.900zM995.700 261l-3.200-1.900 3-1.900z" fill="#5a5a5a"/></svg><div class="a" style="left:711px;top:273px;width:295px;height:459px;background:#fff;border:1px solid #aaa"></div><div class="clip" style="left:712px;top:274px;width:276px;height:457px"><div class="a" style="left:7px;top:-4px;width:2px;height:29px;background:#bbb;"></div><div class="t" style="left:16.8px;top:-3.0px;font-size:13px;color:#6b6b6b;letter-spacing:-0.06px;-webkit-text-stroke:.25px #fff;">Reply</div><div class="a" style="left:15px;top:17.3px;width:248.5px;height:1px;background:#a6a6a6;"></div><div class="a" style="left:6.6px;top:38px;width:262.4px;height:208px;background:#ffe1e2;box-shadow:0 1px 9px rgba(0,0,0,.22)"></div><div class="a" style="left:6.6px;top:38px;width:2.5px;height:208px;background:#f00;"></div><div class="t" style="left:14.9px;top:48.0px;font-size:13px;color:#4a4a4a;letter-spacing:0.18px;-webkit-text-stroke:.25px #ffe1e2;">Wrong address</div><div class="t" style="left:37.9px;top:75.0px;font-size:13px;color:#868686;letter-spacing:0.26px;-webkit-text-stroke:.25px #ffe1e2;">Björn</div><div class="t" style="left:37.9px;top:95.0px;font-size:13px;color:#868686;letter-spacing:0.03px;-webkit-text-stroke:.25px #ffe1e2;">9/17/2021, 2:28:09 PM</div><div class="a" style="left:24px;top:119.2px;width:236px;height:79.8px;background:#e0e4c8;"></div><div class="a" style="left:24px;top:119.2px;width:1px;height:79.8px;background:#b9bca6;"></div><div class="t" style="left:31.6px;top:128.0px;font-size:13px;color:#4a4a4a;letter-spacing:-0.43px;-webkit-text-stroke:.25px #e0e4c8;">Really?</div><div class="t" style="left:54.5px;top:155.0px;font-size:13px;color:#808374;letter-spacing:0.05px;-webkit-text-stroke:.25px #e0e4c8;">Unknown Reviewer</div><div class="t" style="left:54.5px;top:175.0px;font-size:13px;color:#808374;letter-spacing:0.02px;-webkit-text-stroke:.25px #e0e4c8;">9/17/2021, 2:28:15 PM</div><div class="t" style="left:16.8px;top:219.0px;font-size:13px;color:#6b6b6b;letter-spacing:-0.06px;-webkit-text-stroke:.25px #ffe1e2;">Reply</div><div class="a" style="left:15px;top:239.2px;width:248.5px;height:1px;background:#a9a0a0;"></div><div class="a" style="left:7px;top:260px;width:2px;height:200px;background:#bbb;"></div><div class="t" style="left:14.9px;top:269.0px;font-size:13px;color:#4a4a4a;letter-spacing:0.19px;-webkit-text-stroke:.25px #fff;">Qty required?</div><div class="t" style="left:37.9px;top:296.0px;font-size:13px;color:#868686;letter-spacing:0.26px;-webkit-text-stroke:.25px #fff;">Björn</div><div class="t" style="left:37.9px;top:316.0px;font-size:13px;color:#868686;letter-spacing:0.03px;-webkit-text-stroke:.25px #fff;">9/17/2021, 2:37:52 PM</div><div class="a" style="left:24px;top:340px;width:1px;height:80px;background:#c4c4c4;"></div><div class="t" style="left:31.5px;top:350.0px;font-size:13px;color:#4a4a4a;letter-spacing:-0.23px;-webkit-text-stroke:.25px #fff;">Yes, it is.</div><div class="t" style="left:54.5px;top:377.0px;font-size:13px;color:#868686;letter-spacing:0.05px;-webkit-text-stroke:.25px #fff;">Unknown Reviewer</div><div class="t" style="left:54.5px;top:397.0px;font-size:13px;color:#868686;letter-spacing:0.02px;-webkit-text-stroke:.25px #fff;">9/17/2021, 2:37:59 PM</div><div class="a" style="left:24px;top:427px;width:1px;height:40px;background:#c4c4c4;"></div><div class="t" style="left:31.5px;top:436.0px;font-size:13px;color:#4a4a4a;letter-spacing:0.05px;-webkit-text-stroke:.25px #fff;">Okay.</div><svg style="left:0;top:0" width="276" height="457" viewBox="712 274 276 457" fill="none"><g transform="translate(731 349.4)" fill="#8f8f8f"><ellipse cx="6" cy="3.600" rx="3.100" ry="3.600"/><path d="M0 13.500v-1.800q0-1.600 2-2.300l2.300-.8q.5-.2.500-.9h2.400q0 .7.500.9l2.300.8q2 .7 2 2.300v1.800z"/></g><g transform="translate(731 370.5)" stroke="#8f8f8f" fill="none" stroke-width="1.300"><circle cx="6" cy="6" r="5.300"/><path d="M6 2.800v3.400l2.300 1.600"/></g><g transform="translate(748 429.3)" fill="#8b8d7e"><ellipse cx="6" cy="3.600" rx="3.100" ry="3.600"/><path d="M0 13.500v-1.800q0-1.600 2-2.300l2.300-.8q.5-.2.500-.9h2.400q0 .7.500.9l2.300.8q2 .7 2 2.300v1.800z"/></g><g transform="translate(748 451)" stroke="#8b8d7e" fill="none" stroke-width="1.300"><circle cx="6" cy="6" r="5.300"/><path d="M6 2.800v3.400l2.300 1.600"/></g><g transform="translate(731 570.2)" fill="#8f8f8f"><ellipse cx="6" cy="3.600" rx="3.100" ry="3.600"/><path d="M0 13.500v-1.800q0-1.600 2-2.300l2.300-.8q.5-.2.500-.9h2.400q0 .7.500.9l2.300.8q2 .7 2 2.300v1.800z"/></g><g transform="translate(731 591.7)" stroke="#8f8f8f" fill="none" stroke-width="1.300"><circle cx="6" cy="6" r="5.300"/><path d="M6 2.800v3.400l2.300 1.600"/></g><g transform="translate(748 651.5)" fill="#8f8f8f"><ellipse cx="6" cy="3.600" rx="3.100" ry="3.600"/><path d="M0 13.500v-1.800q0-1.600 2-2.300l2.300-.8q.5-.2.500-.9h2.400q0 .7.500.9l2.300.8q2 .7 2 2.300v1.800z"/></g><g transform="translate(748 672.6)" stroke="#8f8f8f" fill="none" stroke-width="1.300"><circle cx="6" cy="6" r="5.300"/><path d="M6 2.800v3.400l2.300 1.600"/></g><g stroke="#c4b2b4" fill="none" stroke-width="1.100"><path d="M938 336.500l1-4 8-8 3 3-8 8z"/><path d="M945 326.500l3 3"/><path d="M938 336.500l2.500-.7-1.800-1.800z" fill="#bfaeb0"/><path d="M960 326.200l8.300 8.600M968.300 326.200l-8.300 8.600" stroke-width="1"/></g><g stroke="#d6dabe" fill="none" stroke-width="1"><path d="M929 414l1-3 6-6 2 2-6 6zM951 413l6-6"/></g></svg></div><div class="a" style="left:988px;top:274px;width:17px;height:457px;background:#f1f1f1;"></div><div class="a" style="left:990px;top:354px;width:13px;height:291px;background:#c1c1c1;"></div><svg style="left:0;top:0" width="1010" height="758" viewBox="0 0 1010 758"><path d="M993 285.200l3.500-3.700 3.500 3.700zM993 718.300l3.500 3.700 3.500-3.700z" fill="#505050"/></svg><svg style="left:925px;top:469px" width="13" height="20" viewBox="0 0 13 20"><path d="M.6.800v15.600l3.700-3.500 2.600 6 2.200-1-2.600-5.800h5.200z" fill="#fff" stroke="#000" stroke-width="1"/></svg><!-- STATUS BAR -->
<div class="a" style="left:0px;top:737px;width:1010px;height:21px;background:#2b579a;"></div><div class="t" style="left:17.7px;top:742.0px;font-size:12px;color:#fff;transform:scaleX(0.942);transform-origin:0 0">Section 1/1</div><div class="t" style="left:103.9px;top:742.0px;font-size:12px;color:#fff;transform:scaleX(0.939);transform-origin:0 0">Page 1/1</div><div class="t" style="left:172.6px;top:742.0px;font-size:12px;color:#fff;transform:scaleX(0.916);transform-origin:0 0">Line 5</div><div class="t" style="left:230.6px;top:742.0px;font-size:12px;color:#fff;transform:scaleX(0.893);transform-origin:0 0">Column 8</div><div class="t" style="left:970.1px;top:742.0px;font-size:12px;color:#fff;transform:scaleX(0.845);transform-origin:0 0">108%</div><div class="a" style="left:89.5px;top:739.5px;width:1px;height:17px;background:#fff;"></div><div class="a" style="left:164px;top:739.5px;width:1px;height:17px;background:#fff;"></div><div class="a" style="left:223px;top:739.5px;width:1px;height:17px;background:#fff;"></div><div class="a" style="left:297.5px;top:739.5px;width:1px;height:17px;background:#fff;"></div><div class="a" style="left:422px;top:739.5px;width:1px;height:17px;background:#fff;"></div><div class="a" style="left:463px;top:739.5px;width:1px;height:17px;background:#fff;"></div><div class="a" style="left:509px;top:739.5px;width:1px;height:17px;background:#fff;"></div><div class="a" style="left:552px;top:739.5px;width:1px;height:17px;background:#fff;"></div><svg style="left:0;top:0" width="1010" height="758" viewBox="0 0 1010 758" fill="none" stroke="#fff">
<g stroke-width="1"><rect x="791.500" y="743.500" width="7" height="8"/><path d="M793 745.500h4M793 747.500h4M793 749.500h4" stroke-width="1"/>
<path d="M795 739.500l-2.800 2.800h5.600zM795 755.500l-2.800-2.800h5.600zM787 747.500l2.800-2.800v5.600zM803 747.500l-2.800-2.800v5.600z" fill="#fff" stroke="none"/>
<rect x="809.500" y="742.500" width="7" height="10"/><path d="M811 744.500h4M811 746.500h4M811 748.500h4M811 750.500h4" stroke-width="1"/>
<path d="M805 747.500l2.800-2.800v5.600zM821 747.500l-2.800-2.800v5.600z" fill="#fff" stroke="none"/></g>
<path d="M827 748h8" stroke-width="2.200"/><path d="M846 747.500h91" stroke-width="1"/><rect x="890" y="743.500" width="4" height="9.500" fill="#fff" stroke="none"/>
<path d="M947.800 748h8M951.800 744v8" stroke-width="2.200"/></svg>
</body></html>
